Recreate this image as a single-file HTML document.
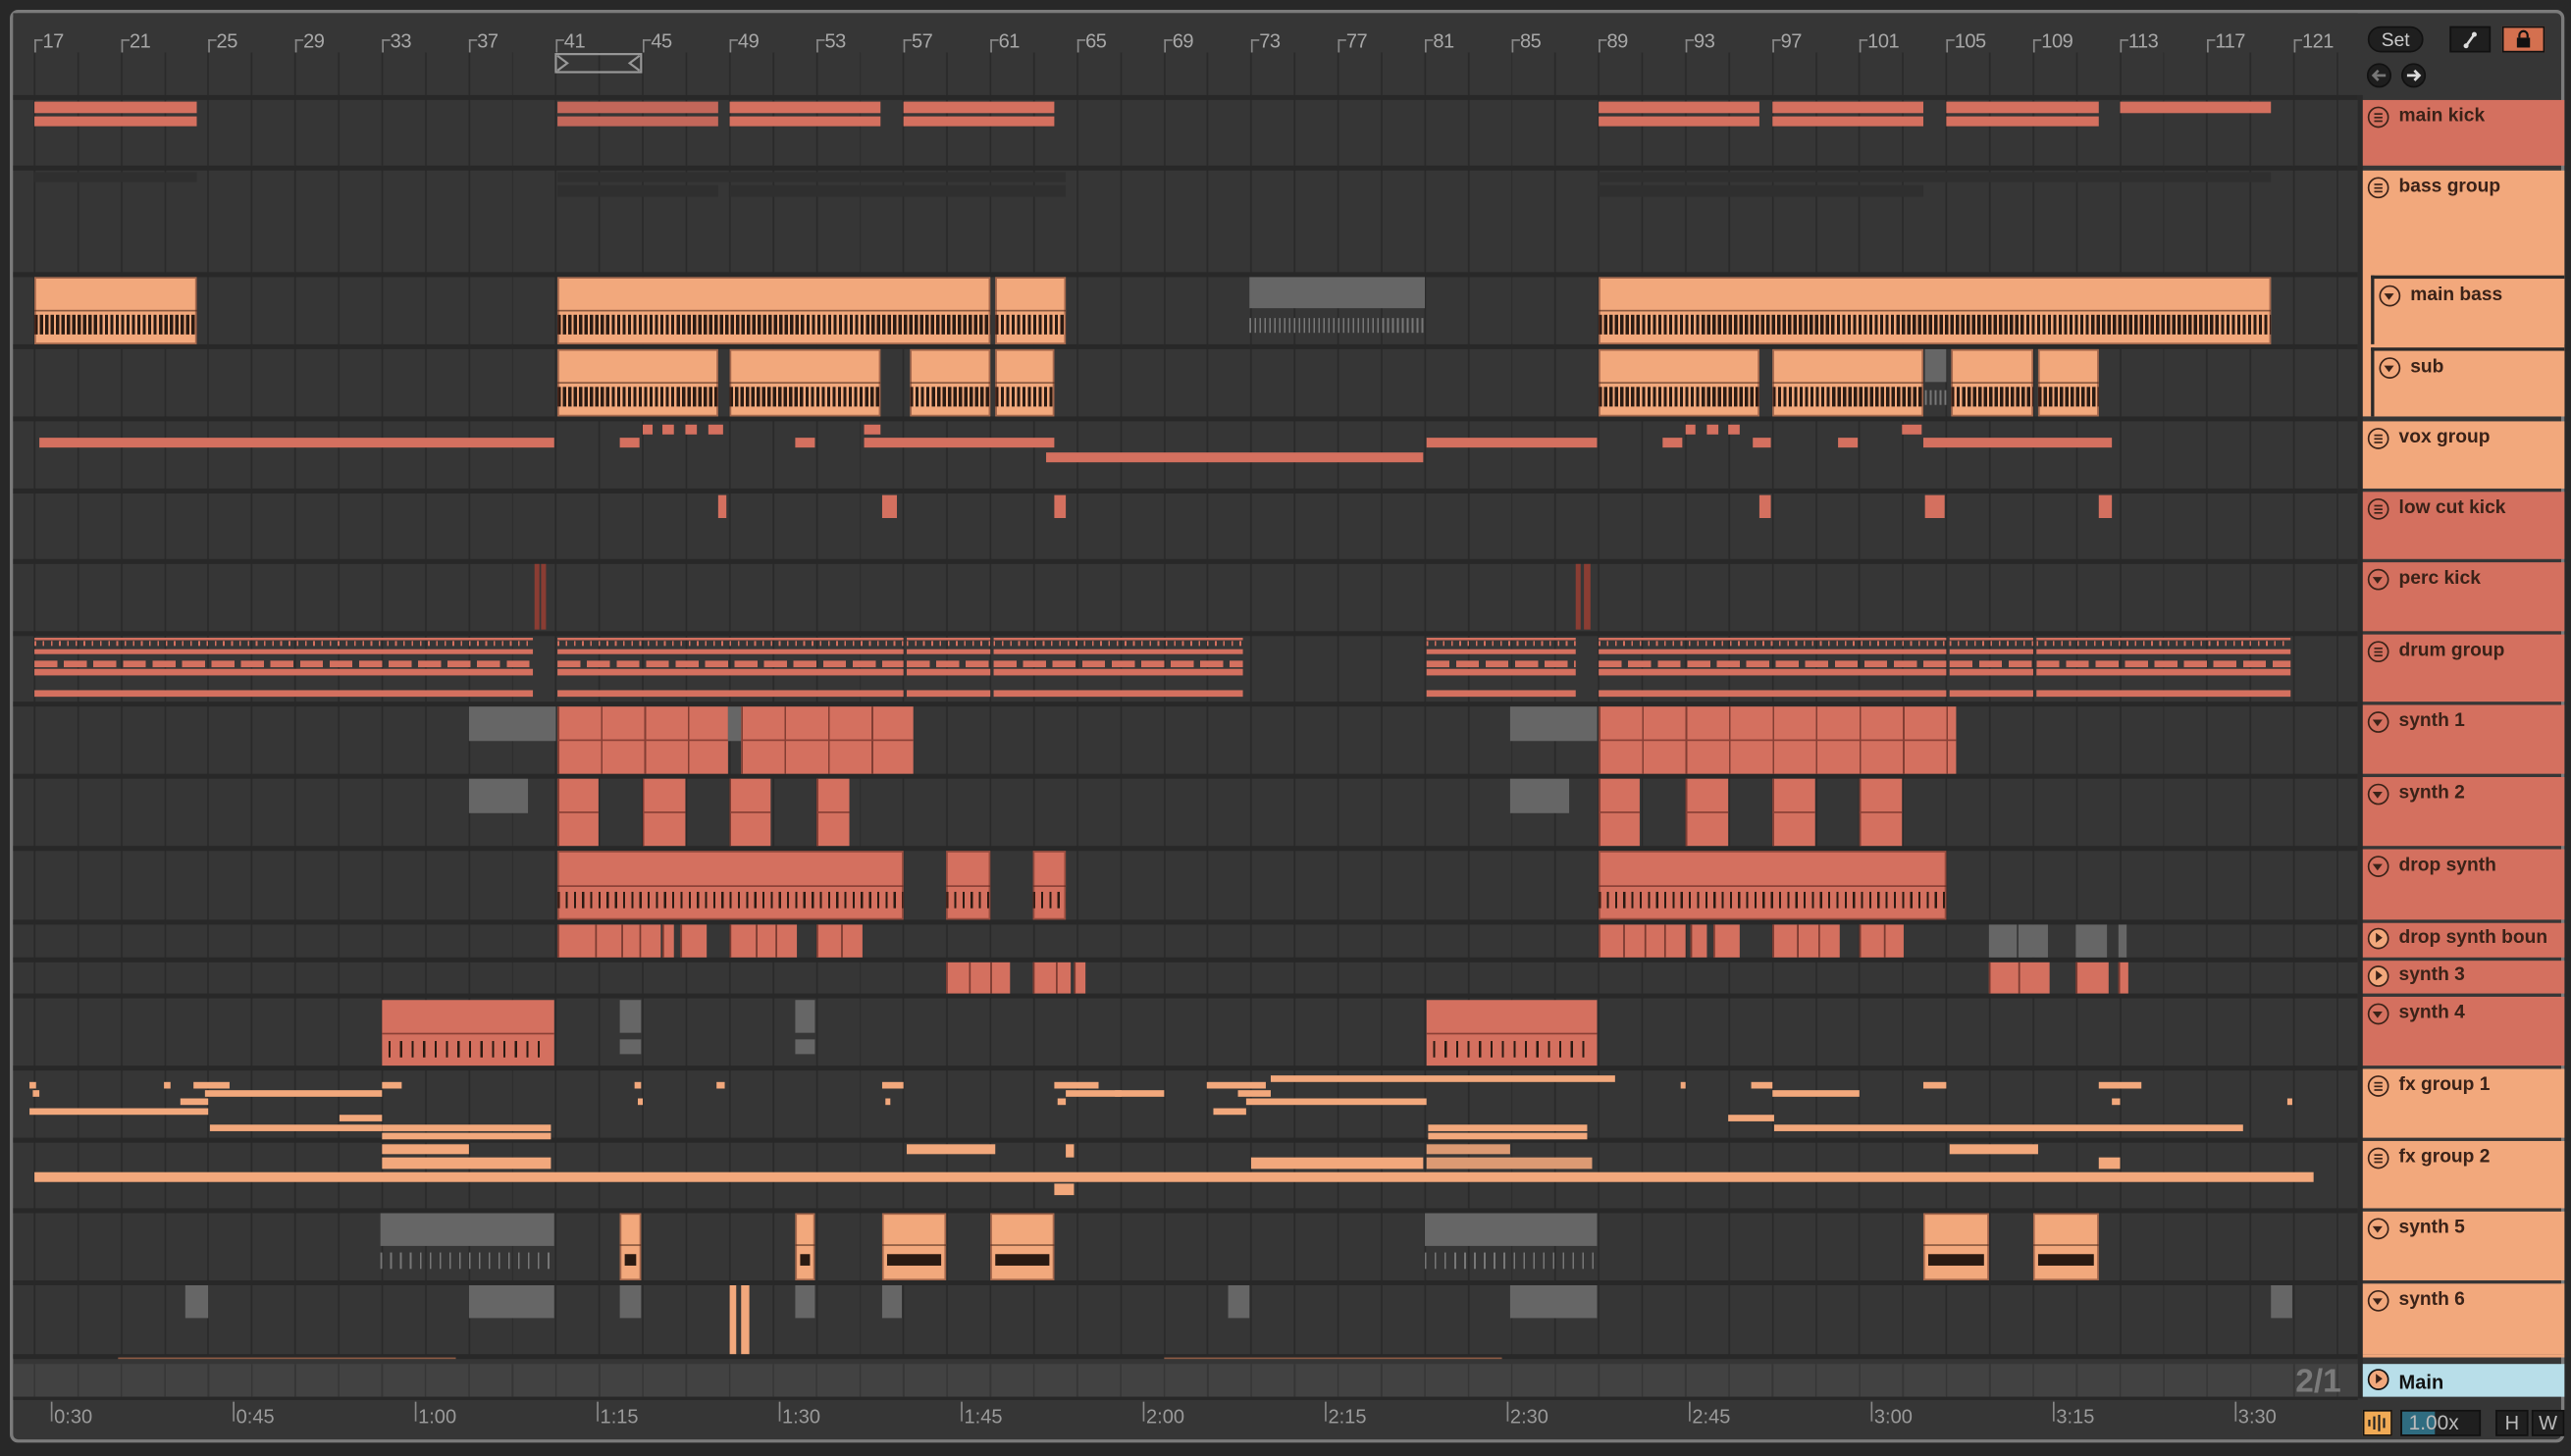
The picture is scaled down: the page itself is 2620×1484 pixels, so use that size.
<!DOCTYPE html>
<html><head><meta charset="utf-8">
<style>
html,body{margin:0;padding:0;background:#282828;width:2620px;height:1484px;overflow:hidden}
#s{position:absolute;left:0;top:0;width:1568px;height:888px;transform:scale(1.670918);transform-origin:0 0;font-family:"Liberation Sans","DejaVu Sans",sans-serif;background:#282828}
.a{position:absolute}
#panel{left:6px;top:6px;width:1558px;height:874px;border:2px solid #7b7b7b;border-radius:5px;background:#363636;box-sizing:border-box}
#grid{left:8px;top:32px;width:1430px;height:796px;background:repeating-linear-gradient(90deg,#2a2a2a 0 1px,transparent 1px 26.5px);background-position:12.6px 0;background-color:#363636}
.sep{position:absolute;left:8px;width:1430px;height:3px;background:#282828}
.r{background:#d4705f}.rd{background:#c3675a}.p{background:#f2a87c}.pd{background:#dc9a73}.g{background:#666}.dk{background:#2f2f2f}
.num{position:absolute;top:18px;font-size:12px;color:#a8a8a8;letter-spacing:-0.3px}
.tk{position:absolute;top:24px;width:4px;height:7px;border-left:1px solid #888;border-top:1px solid #888}
.tm{position:absolute;top:857px;font-size:12px;color:#9a9a9a}
.tml{position:absolute;top:855px;width:1px;height:12px;background:#888}
.h{position:absolute;left:1441px;width:123px;box-sizing:border-box;font-size:11.5px;font-weight:bold;color:#3a2218;padding:4px 0 0 22px;white-space:nowrap;overflow:hidden}
.h .ic{position:absolute;left:3px;top:4px;width:13px;height:13px;border:1.3px solid #3a2218;border-radius:50%;box-sizing:border-box}
.ic::before{content:"";position:absolute}
.ic.l::before{left:2.6px;top:2.6px;width:5.2px;height:1.2px;background:#3a2218;box-shadow:0 2.2px 0 #3a2218,0 4.4px 0 #3a2218}
.ic.d::before{left:2.2px;top:3.6px;border-left:3.2px solid transparent;border-right:3.2px solid transparent;border-top:4.2px solid #3a2218}
.ic.p::before{left:3.6px;top:2.2px;border-top:3.2px solid transparent;border-bottom:3.2px solid transparent;border-left:4.2px solid #3a2218}
.hr{background:#d4705f}.hp{background:#f2a87c}
</style></head><body><div id="s">
<div id="panel" class="a"></div>
<div id="grid" class="a"></div>
<div class="a" style="left:8px;top:8px;width:1430px;height:24px;background:#363636"></div>
<div id="clips"></div>

<div class="tk" style="left:21px"></div><div class="num" style="left:26px">17</div>
<div class="tk" style="left:74px"></div><div class="num" style="left:79px">21</div>
<div class="tk" style="left:127px"></div><div class="num" style="left:132px">25</div>
<div class="tk" style="left:180px"></div><div class="num" style="left:185px">29</div>
<div class="tk" style="left:233px"></div><div class="num" style="left:238px">33</div>
<div class="tk" style="left:286px"></div><div class="num" style="left:291px">37</div>
<div class="tk" style="left:339px"></div><div class="num" style="left:344px">41</div>
<div class="tk" style="left:392px"></div><div class="num" style="left:397px">45</div>
<div class="tk" style="left:445px"></div><div class="num" style="left:450px">49</div>
<div class="tk" style="left:498px"></div><div class="num" style="left:503px">53</div>
<div class="tk" style="left:551px"></div><div class="num" style="left:556px">57</div>
<div class="tk" style="left:604px"></div><div class="num" style="left:609px">61</div>
<div class="tk" style="left:657px"></div><div class="num" style="left:662px">65</div>
<div class="tk" style="left:710px"></div><div class="num" style="left:715px">69</div>
<div class="tk" style="left:763px"></div><div class="num" style="left:768px">73</div>
<div class="tk" style="left:816px"></div><div class="num" style="left:821px">77</div>
<div class="tk" style="left:869px"></div><div class="num" style="left:874px">81</div>
<div class="tk" style="left:922px"></div><div class="num" style="left:927px">85</div>
<div class="tk" style="left:975px"></div><div class="num" style="left:980px">89</div>
<div class="tk" style="left:1028px"></div><div class="num" style="left:1033px">93</div>
<div class="tk" style="left:1081px"></div><div class="num" style="left:1086px">97</div>
<div class="tk" style="left:1134px"></div><div class="num" style="left:1139px">101</div>
<div class="tk" style="left:1187px"></div><div class="num" style="left:1192px">105</div>
<div class="tk" style="left:1240px"></div><div class="num" style="left:1245px">109</div>
<div class="tk" style="left:1293px"></div><div class="num" style="left:1298px">113</div>
<div class="tk" style="left:1346px"></div><div class="num" style="left:1351px">117</div>
<div class="tk" style="left:1399px"></div><div class="num" style="left:1404px">121</div>

<svg class="a" style="left:338px;top:32px" width="56" height="14"><rect x="1" y="1" width="52" height="11" fill="none" stroke="#999" stroke-width="1.3"/><path d="M2 2 L8 6.5 L2 11 M52 2 L46 6.5 L52 11" fill="none" stroke="#999" stroke-width="1.3"/></svg>

<div class="a" style="left:1444px;top:16px;width:34px;height:16px;border-radius:8px;background:#1f1f1f;border:1px solid #111;color:#ccc;font-size:11.5px;text-align:center;line-height:16px;box-sizing:border-box">Set</div>
<div class="a" style="left:1494px;top:16px;width:25px;height:16px;background:#1f1f1f;border:1px solid #111;box-sizing:border-box"><svg width="23" height="14"><path d="M9 11 L14 4" stroke="#ddd" stroke-width="1.5"/><circle cx="9" cy="11" r="1.5" fill="#ddd"/><circle cx="14" cy="4" r="1.5" fill="#ddd"/></svg></div>
<div class="a" style="left:1526px;top:16px;width:26px;height:16px;background:#d4704f;border:1px solid #111;box-sizing:border-box"><svg width="24" height="14"><rect x="8" y="6" width="8" height="6" fill="#111"/><path d="M9.5 6 V4.5 a2.5 2.5 0 0 1 5 0 V6" fill="none" stroke="#111" stroke-width="1.3"/></svg></div>
<svg class="a" style="left:1443px;top:38px" width="40" height="16"><circle cx="8" cy="8" r="7" fill="#1e1e1e" stroke="#111"/><path d="M12 8 H5 M7.5 5 L4.5 8 L7.5 11" stroke="#777" stroke-width="1.6" fill="none"/><circle cx="29" cy="8" r="7" fill="#1e1e1e" stroke="#111"/><path d="M25 8 H32 M29.5 5 L32.5 8 L29.5 11" stroke="#ddd" stroke-width="1.6" fill="none"/></svg>

<div class="a" style="left:1438px;top:58px;width:3px;height:795px;background:#2a2a2a"></div>

<div class="h hr" style="top:61px;height:40px"><span class="ic l"></span>main kick</div>
<div class="h hp" style="top:104px;height:150px"><span class="ic l"></span>bass group</div>
<div class="h hp" style="left:1446px;width:118px;top:168px;height:42px;border-left:2px solid #2a2a2a;border-top:2px solid #2a2a2a"><span class="ic d"></span>main bass</div>
<div class="h hp" style="left:1446px;width:118px;top:212px;height:42px;border-left:2px solid #2a2a2a;border-top:2px solid #2a2a2a"><span class="ic d"></span>sub</div>
<div class="h hp" style="top:257px;height:41px"><span class="ic l"></span>vox group</div>
<div class="h hr" style="top:300px;height:41px"><span class="ic l"></span>low cut kick</div>
<div class="h hr" style="top:343px;height:42px"><span class="ic d"></span>perc kick</div>
<div class="h hr" style="top:387px;height:41px"><span class="ic l"></span>drum group</div>
<div class="h hr" style="top:430px;height:42px"><span class="ic d"></span>synth 1</div>
<div class="h hr" style="top:474px;height:42px"><span class="ic d"></span>synth 2</div>
<div class="h hr" style="top:518px;height:43px"><span class="ic d"></span>drop synth</div>
<div class="h hr" style="top:563px;height:21px;padding-top:3px"><span class="ic p" style="top:3px"></span>drop synth boun</div>
<div class="h hr" style="top:586px;height:20px;padding-top:3px"><span class="ic p" style="top:3px"></span>synth 3</div>
<div class="h hr" style="top:608px;height:42px"><span class="ic d"></span>synth 4</div>
<div class="h hp" style="top:652px;height:42px"><span class="ic l"></span>fx group 1</div>
<div class="h hp" style="top:696px;height:41px"><span class="ic l"></span>fx group 2</div>
<div class="h hp" style="top:739px;height:42px"><span class="ic d"></span>synth 5</div>
<div class="h hp" style="top:783px;height:43px"><span class="ic d"></span>synth 6</div>
<div class="a" style="left:1441px;top:826px;width:123px;height:2px;background:#f2a87c"></div>
<div class="h" style="top:832px;height:20px;background:#b8dee9;color:#111;font-size:12px;padding-top:4px"><span class="ic p" style="border-color:#111;top:3px"></span>Main</div>

<div class="a" style="left:8px;top:832px;width:1430px;height:20px;background:repeating-linear-gradient(90deg,#363636 0 1px,transparent 1px 26.5px) 12.6px 0/auto,#424242"></div>
<div class="a" style="left:1400px;top:832px;font-size:20px;font-weight:bold;color:#7a7a7a">2/1</div>
<div class="a" style="left:72px;top:828px;width:206px;height:1px;background:#8a5a44"></div>
<div class="a" style="left:710px;top:828px;width:206px;height:1px;background:#8a5a44"></div>
<div class="a" style="left:8px;top:852px;width:1430px;height:2px;background:#282828"></div>
<div class="tml" style="left:31px"></div><div class="tm" style="left:33px">0:30</div>
<div class="tml" style="left:142px"></div><div class="tm" style="left:144px">0:45</div>
<div class="tml" style="left:253px"></div><div class="tm" style="left:255px">1:00</div>
<div class="tml" style="left:364px"></div><div class="tm" style="left:366px">1:15</div>
<div class="tml" style="left:475px"></div><div class="tm" style="left:477px">1:30</div>
<div class="tml" style="left:586px"></div><div class="tm" style="left:588px">1:45</div>
<div class="tml" style="left:697px"></div><div class="tm" style="left:699px">2:00</div>
<div class="tml" style="left:808px"></div><div class="tm" style="left:810px">2:15</div>
<div class="tml" style="left:919px"></div><div class="tm" style="left:921px">2:30</div>
<div class="tml" style="left:1030px"></div><div class="tm" style="left:1032px">2:45</div>
<div class="tml" style="left:1141px"></div><div class="tm" style="left:1143px">3:00</div>
<div class="tml" style="left:1252px"></div><div class="tm" style="left:1254px">3:15</div>
<div class="tml" style="left:1363px"></div><div class="tm" style="left:1365px">3:30</div>

<div class="a" style="left:1441px;top:860px;width:18px;height:16px;background:#f0aa55;border:1px solid #111;box-sizing:border-box"><svg width="16" height="14"><path d="M3 5v4M6 3v8M9 2v10M12 4v6" stroke="#222" stroke-width="1.3"/></svg></div>
<div class="a" style="left:1464px;top:860px;width:49px;height:16px;background:#1f1f1f;border:1px solid #111;box-sizing:border-box;overflow:hidden"><div class="a" style="left:0;top:0;width:20px;height:14px;background:#2f6c80"></div><div class="a" style="left:4px;top:0;font-size:12.5px;color:#bbb;line-height:14px">1.00x</div></div>
<div class="a" style="left:1522px;top:860px;width:20px;height:16px;background:#1f1f1f;border:1px solid #111;box-sizing:border-box;color:#bbb;font-size:12px;text-align:center;line-height:14px">H</div>
<div class="a" style="left:1544px;top:860px;width:20px;height:16px;background:#1f1f1f;border:1px solid #111;box-sizing:border-box;color:#bbb;font-size:12px;text-align:center;line-height:14px">W</div>

<script>
var C=document.getElementById('clips'),H='';
function c(x1,x2,y1,y2,col,extra){H+='<div class="a '+col+'" style="left:'+x1+'px;top:'+y1+'px;width:'+(x2-x1)+'px;height:'+(y2-y1)+'px;'+(extra||'')+'"></div>';}
[58,101,166,210,254,298,341,385,428,472,516,561,584,606,650,694,737,781,826].forEach(function(y){H+='<div class="sep" style="top:'+y+'px"></div>';});
var sl='box-shadow:inset 0 0 0 1px rgba(90,40,30,.5);';
[[21,120],[340,438,'rd'],[445,537],[551,643],[975,1073],[1081,1173],[1187,1280]].forEach(function(a){c(a[0],a[1],62,69,a[2]||'r');c(a[0],a[1],71,77,a[2]||'r');});
c(1293,1385,62,69,'r');
c(21,120,105,111,'dk');c(340,650,105,111,'dk');c(340,438,113,120,'dk');c(445,650,113,120,'dk');c(975,1385,105,111,'dk');c(975,1173,113,120,'dk');
var wv='background-image:linear-gradient(#8a5a40,#8a5a40),repeating-linear-gradient(90deg,#2a1a12 0 2px,transparent 2px 3.3px);background-size:100% 1px,100% 12px;background-position:0 20px,0 23px;background-repeat:no-repeat;'+sl;
[[21,120],[340,604],[607,650],[975,1385]].forEach(function(a){c(a[0],a[1],169,210,'p',wv);});
c(762,869,169,188,'g');c(762,869,194,203,'',"background:repeating-linear-gradient(90deg,#777 0 1px,transparent 1px 3px)");
[[340,438],[445,537],[555,604],[607,643],[975,1073],[1081,1173],[1190,1240],[1243,1280]].forEach(function(a){c(a[0],a[1],213,254,'p',wv);});
c(1174,1187,213,233,'g');c(1174,1187,238,247,'',"background:repeating-linear-gradient(90deg,#777 0 1px,transparent 1px 3px)");
[[24,338],[378,390],[485,497],[527,643],[870,974],[1014,1026],[1069,1080],[1121,1133],[1173,1288]].forEach(function(a){c(a[0],a[1],267,273,'r');});
[[392,398],[404,411],[418,425],[432,441],[527,537],[1028,1034],[1041,1048],[1054,1061],[1160,1172]].forEach(function(a){c(a[0],a[1],259,265,'r');});
c(638,868,276,282,'r');
[[438,443],[538,547],[643,650],[1073,1080],[1174,1186],[1280,1288]].forEach(function(a){c(a[0],a[1],302,316,'r');});
c(326,329,344,384,'','background:#8a3d33');c(330,333,344,384,'','background:#8a3d33');c(961,964,344,384,'','background:#8a3d33');c(966,970,344,384,'','background:#8a3d33');
var dr='background:linear-gradient(#d4705f,#d4705f) 0 0/100% 1.5px no-repeat,repeating-linear-gradient(90deg,#d4705f 0 1px,transparent 1px 5px) 0 2px/100% 3px no-repeat,linear-gradient(#d4705f,#d4705f) 0 7px/100% 3px no-repeat,repeating-linear-gradient(90deg,#d4705f 0 14px,transparent 14px 18px) 0 14px/100% 4px no-repeat,linear-gradient(#d4705f,#d4705f) 0 19px/100% 4px no-repeat,linear-gradient(#d4705f,#d4705f) 0 32px/100% 4px no-repeat;';
[[21,325],[340,551],[553,604],[606,758],[870,961],[975,1187],[1189,1240],[1242,1397]].forEach(function(a){c(a[0],a[1],389,427,'',dr);});
var sy='background:linear-gradient(#8a4036,#8a4036) 0 20px/100% 1px no-repeat,repeating-linear-gradient(90deg,rgba(110,50,40,.8) 0 1px,transparent 1px 26.5px),#d4705f;';
c(286,339,431,452,'g');c(340,444,431,472,'',sy);c(444,452,431,452,'g');c(452,557,431,472,'',sy);
c(921,974,431,452,'g');c(975,1193,431,472,'',sy);
c(286,322,475,496,'g');[[340,365],[392,418],[445,470],[498,518],[975,1000],[1028,1054],[1081,1107],[1134,1160]].forEach(function(a){c(a[0],a[1],475,516,'',sy);});
c(921,957,475,496,'g');
var ds='background:linear-gradient(#8a4036,#8a4036) 0 21px/100% 1px no-repeat,repeating-linear-gradient(90deg,#2a1a12 0 1.3px,transparent 1.3px 5px) 0 25px/100% 10px no-repeat,#d4705f;'+sl;
[[340,551],[577,604],[630,650],[975,1187]].forEach(function(a){c(a[0],a[1],519,561,'',ds);});
var bx=[[340,362],[363,378],[379,389],[390,402],[404,410],[415,430],[445,460],[461,472],[473,485],[498,512],[513,525],[975,989],[990,1002],[1003,1014],[1015,1027],[1031,1040],[1045,1060],[1081,1095],[1096,1108],[1109,1121],[1134,1148],[1149,1160]];
bx.forEach(function(a){c(a[0],a[1],564,584,'r','border-left:1px solid #7a3a30;');});
[[1213,1230,'g'],[1231,1249,'g'],[1266,1285,'g'],[1292,1297,'g']].forEach(function(a){c(a[0],a[1],564,584,a[2]);});
[[577,590],[591,603],[604,615],[630,643],[644,652],[655,661],[1213,1230],[1231,1249],[1266,1285],[1292,1297]].forEach(function(a){c(a[0],a[1],587,606,'r','border-left:1px solid #7a3a30;');});
var s4='background:linear-gradient(#8a4036,#8a4036) 0 20px/100% 1px no-repeat,repeating-linear-gradient(90deg,#2a1a12 0 1.3px,transparent 1.3px 7px) 4px 25px/90% 10px no-repeat,#d4705f;';
c(233,338,610,650,'',s4);c(870,974,610,650,'',s4);
c(378,391,610,630,'g');c(378,391,634,643,'g');c(485,497,610,630,'g');c(485,497,634,643,'g');
[[18,22,660],[100,104,660],[118,140,660],[125,233,665],[233,245,660],[18,127,676],[110,127,670],[128,233,686],[207,233,680],[233,336,686],[233,336,691],[387,391,660],[437,442,660],[538,551,660],[643,670,660],[650,684,665],[680,710,665],[736,772,660],[775,985,656],[755,775,665],[760,870,670],[740,760,676],[871,968,686],[871,968,691],[1025,1028,660],[1068,1081,660],[1081,1134,665],[1054,1082,680],[1082,1368,686],[1173,1187,660],[1280,1306,660],[1288,1293,670],[389,392,670],[540,543,670],[645,650,670],[20,24,665],[1395,1398,670]].forEach(function(a){c(a[0],a[1],a[2],a[2]+4,'p');});
c(21,1411,715,721,'p');c(233,286,698,704,'p');c(233,336,706,713,'p');c(553,607,698,704,'p');c(870,921,698,704,'pd');c(870,971,706,713,'pd');c(763,868,706,713,'p');c(1189,1243,698,704,'p');c(1280,1293,706,713,'p');c(643,655,722,729,'p');c(650,655,698,706,'p');
var s5='background:linear-gradient(#8a5a40,#8a5a40) 0 19px/100% 1px no-repeat,linear-gradient(#2a1a12,#2a1a12) 3px 25px/calc(100% - 6px) 7px no-repeat,#f2a87c;'+sl;
c(232,338,740,760,'g');c(232,338,764,774,'',"background:repeating-linear-gradient(90deg,#777 0 1px,transparent 1px 6px)");
c(869,974,740,760,'g');c(869,974,764,774,'',"background:repeating-linear-gradient(90deg,#777 0 1px,transparent 1px 6px)");
[[378,391],[485,497],[538,577],[604,643],[1173,1213],[1240,1280]].forEach(function(a){c(a[0],a[1],740,781,'',s5);});
[[113,127],[286,338],[378,391],[485,497],[538,550],[749,762],[921,974],[1385,1398]].forEach(function(a){c(a[0],a[1],784,804,'g');});
c(445,449,784,826,'p');c(452,457,784,826,'p');
C.innerHTML=H;
</script>
</div></body></html>
